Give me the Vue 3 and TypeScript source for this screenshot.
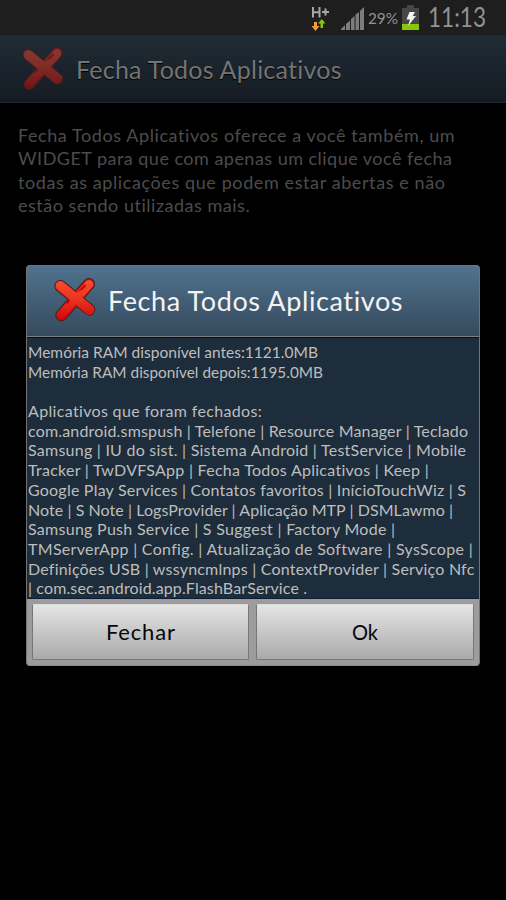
<script setup lang="ts">
	import type { Directive } from "vue";

	interface Line {
		text: string;
		width: number;
	}

	const title = "Fecha Todos Aplicativos";

	const intro: Line[] = [
		{ text: "Fecha Todos Aplicativos oferece a você também, um", width: 437 },
		{ text: "WIDGET para que com apenas um clique você fecha", width: 434 },
		{ text: "todas as aplicações que podem estar abertas e não", width: 427 },
		{ text: "estão sendo utilizadas mais.", width: 232 },
	];

	const report: Line[] = [
		{ text: "Memória RAM disponível antes:1121.0MB", width: 290 },
		{ text: "Memória RAM disponível depois:1195.0MB", width: 295 },
		{ text: "", width: 0 },
		{ text: "Aplicativos que foram fechados:", width: 234 },
		{ text: "com.android.smspush | Telefone | Resource Manager | Teclado", width: 440 },
		{ text: "Samsung | IU do sist. | Sistema Android | TestService | Mobile", width: 438 },
		{ text: "Tracker | TwDVFSApp | Fecha Todos Aplicativos | Keep |", width: 401 },
		{ text: "Google Play Services | Contatos favoritos | InícioTouchWiz | S", width: 438 },
		{ text: "Note | S Note | LogsProvider | Aplicação MTP | DSMLawmo |", width: 425 },
		{ text: "Samsung Push Service | S Suggest | Factory Mode |", width: 367 },
		{ text: "TMServerApp | Config. | Atualização de Software | SysScope |", width: 444 },
		{ text: "Definições USB | wssyncmlnps | ContextProvider | Serviço Nfc", width: 446 },
		{ text: "| com.sec.android.app.FlashBarService .", width: 279 },
	];

	// spreads the letters of a line so that it takes the given width,
	// or narrows them when the line is already too long
	const vFit: Directive<HTMLElement, number> = {
		mounted(el, { value }) {
			const gaps = (el.textContent ?? "").length - 1;
			if (gaps < 1) return;
			const width = el.getBoundingClientRect().width;
			if (width > value) {
				el.style.transform = `scaleX(${value / width})`;
				el.style.marginRight = `${value - width}px`;
				return;
			}
			const spacing = (value - width) / gaps;
			el.style.letterSpacing = `${spacing}px`;
			el.style.marginRight = `${-spacing}px`;
		},
	};
</script>

<template>
	<div class="screen">
		<svg width="0" height="0" class="defs">
			<defs>
				<linearGradient id="red" gradientUnits="userSpaceOnUse" x1="0" y1="0" x2="0" y2="128">
					<stop offset="0" stop-color="#fa5030" />
					<stop offset="0.5" stop-color="#ea3420" />
					<stop offset="1" stop-color="#d0050c" />
				</linearGradient>
				<symbol id="cross" viewBox="0 0 126 132">
					<g fill="none" stroke-linecap="round">
						<path d="M105 18 L22 112 M19 24 L106 95" stroke="#42201e" stroke-width="36" />
						<path d="M105 18 L22 112" stroke="#c40a08" stroke-width="31" />
						<path d="M105 19 L22 110" stroke="url(#red)" stroke-width="26" />
						<path d="M45 65 L57 75 L43 88 L38 75Z" fill="#b00402" />
						<path d="M84 26 L93 18 L96 24 L76 48 L70 42Z" fill="#cc0a04" />
						<path d="M19 24 L106 95" stroke="#d91a10" stroke-width="31" />
						<path d="M19 23 L106 93" stroke="url(#red)" stroke-width="27" />
						<path d="M82 45 L62 65 L42 89" stroke="url(#red)" stroke-width="16" />
					</g>
				</symbol>
			</defs>
		</svg>

		<div class="status">
			<svg class="network" width="20" height="26" viewBox="0 0 20 26">
				<path d="M2 2V12.5M2 7.2H8.5M8.5 2V12.5M11 7H18M14.5 3.5V10.5" fill="none" stroke="#a6a6a6" stroke-width="2" />
				<path d="M3 17H6V21H8.5L4.5 26L.5 21H3Z" fill="#f19b38" />
				<path d="M9.5 23H12V18.5H14.5L10.8 14L7 18.5H9.5Z" fill="#86c80a" />
			</svg>
			<svg class="signal" width="24" height="24" viewBox="0 0 24 24">
				<path d="M0 23V22L4 18V23ZM5 23V17L9 13.5V23ZM10 23V12L13.5 9V23ZM14.5 23V7.5L18 5V23ZM19 23V4L23 0V23Z" fill="#7d7d7d" />
			</svg>
			<span class="percent"><span v-fit="30">29%</span></span>
			<svg class="battery" width="17" height="25" viewBox="0 0 17 25">
				<path d="M5 0H12V3H17V25H0V3H5Z" fill="#464646" />
				<path d="M0 19H17V25H0Z" fill="#85c803" />
				<path d="M7.5 7L13 7L10.8 11H14L6 21L8 14.5H4.5Z" fill="#f4f4f4" />
			</svg>
			<span class="clock"><span v-fit="58">11:13</span></span>
		</div>

		<div class="titlebar">
			<svg class="icon" width="42" height="44"><use href="#cross" /></svg>
			<span v-fit="266">{{ title }}</span>
		</div>

		<div class="intro">
			<div v-for="line in intro" :key="line.text" class="line">
				<span v-fit="line.width">{{ line.text }}</span>
			</div>
		</div>

		<div class="dialog">
			<div class="heading">
				<svg class="icon" width="42" height="44"><use href="#cross" /></svg>
				<span v-fit="295">{{ title }}</span>
			</div>
			<div class="report">
				<div v-for="line in report" :key="line.text" class="line">
					<span v-fit="line.width">{{ line.text }}</span>
				</div>
			</div>
			<div class="buttons">
				<button type="button"><span v-fit="69">Fechar</span></button>
				<button type="button"><span v-fit="26">Ok</span></button>
			</div>
		</div>
	</div>
</template>

<style>
	body {
		background: #000;
	}
</style>

<style scoped>
	.screen {
		box-sizing: border-box;
		width: 506px;
		height: 900px;
		overflow: hidden;
		background: #000;
		font-family: Lato, "Open Sans", sans-serif;
		white-space: nowrap;
	}

	.screen span {
		display: inline-block;
		transform-origin: left;
	}

	.defs {
		display: block;
	}

	.status {
		display: flex;
		box-sizing: border-box;
		height: 35px;
		padding-left: 311px;
		background: #1e1e1e;
		color: #929292;
	}

	.network {
		margin-top: 5px;
	}

	.signal {
		margin: 7px 0 0 10px;
	}

	.percent {
		width: 31px;
		margin: 7px 0 0 3px;
		font-size: 16px;
		line-height: 22px;
	}

	.battery {
		margin: 5px 0 0 3px;
	}

	.clock {
		margin: 1px 0 0 9px;
		font-size: 26px;
		font-kerning: none;
		line-height: 32px;
	}

	.titlebar {
		display: flex;
		box-sizing: border-box;
		height: 68px;
		padding-left: 22px;
		border-bottom: 1px solid #202a31;
		background: linear-gradient(#202c35, #151b23);
		color: #747474;
		font-size: 25px;
		line-height: 69px;
		text-shadow: 0 1px 1px #000;
	}

	.titlebar .icon {
		margin: 12px 12px 0 0;
		opacity: 0.48;
	}

	.intro {
		height: 162px;
		padding: 20px 0 0 18px;
		box-sizing: border-box;
		color: #4c4c4c;
		font-size: 18px;
	}

	.intro .line {
		height: 23.3px;
		line-height: 24px;
	}

	.dialog {
		box-sizing: border-box;
		width: 454px;
		height: 401px;
		margin-left: 26px;
		border: 1px solid #737373;
		border-bottom-color: #8e8b8e;
		border-radius: 4px;
		overflow: hidden;
		background: #9e9b9e;
	}

	.heading {
		display: flex;
		box-sizing: border-box;
		height: 71px;
		padding-left: 27px;
		border-bottom: 1px solid #7c8083;
		background: linear-gradient(#4f728e, #364a5d);
		color: #f3f3f3;
		font-size: 27px;
		line-height: 70px;
	}

	.heading .icon {
		margin: 12px 12px 0 0;
	}

	.report {
		box-sizing: border-box;
		height: 262px;
		padding: 4px 0 0 1px;
		border-top: 1px solid #071019;
		border-bottom: 1px solid #0b1e33;
		background: #1e2d3b;
		color: #bdbdbd;
		font-size: 16px;
	}

	.report .line {
		height: 19.7px;
		line-height: 19px;
	}

	.buttons {
		display: grid;
		grid-template-columns: 217px 218px;
		gap: 7px;
		padding: 5px;
	}

	button {
		height: 56px;
		padding: 0 0 1px;
		border: 1px solid #777;
		border-top-color: #dcdcdc;
		border-radius: 2px;
		background: linear-gradient(#e4e4e4, #aaa);
		color: #080808;
		font-family: inherit;
		font-size: 22px;
	}
</style>
